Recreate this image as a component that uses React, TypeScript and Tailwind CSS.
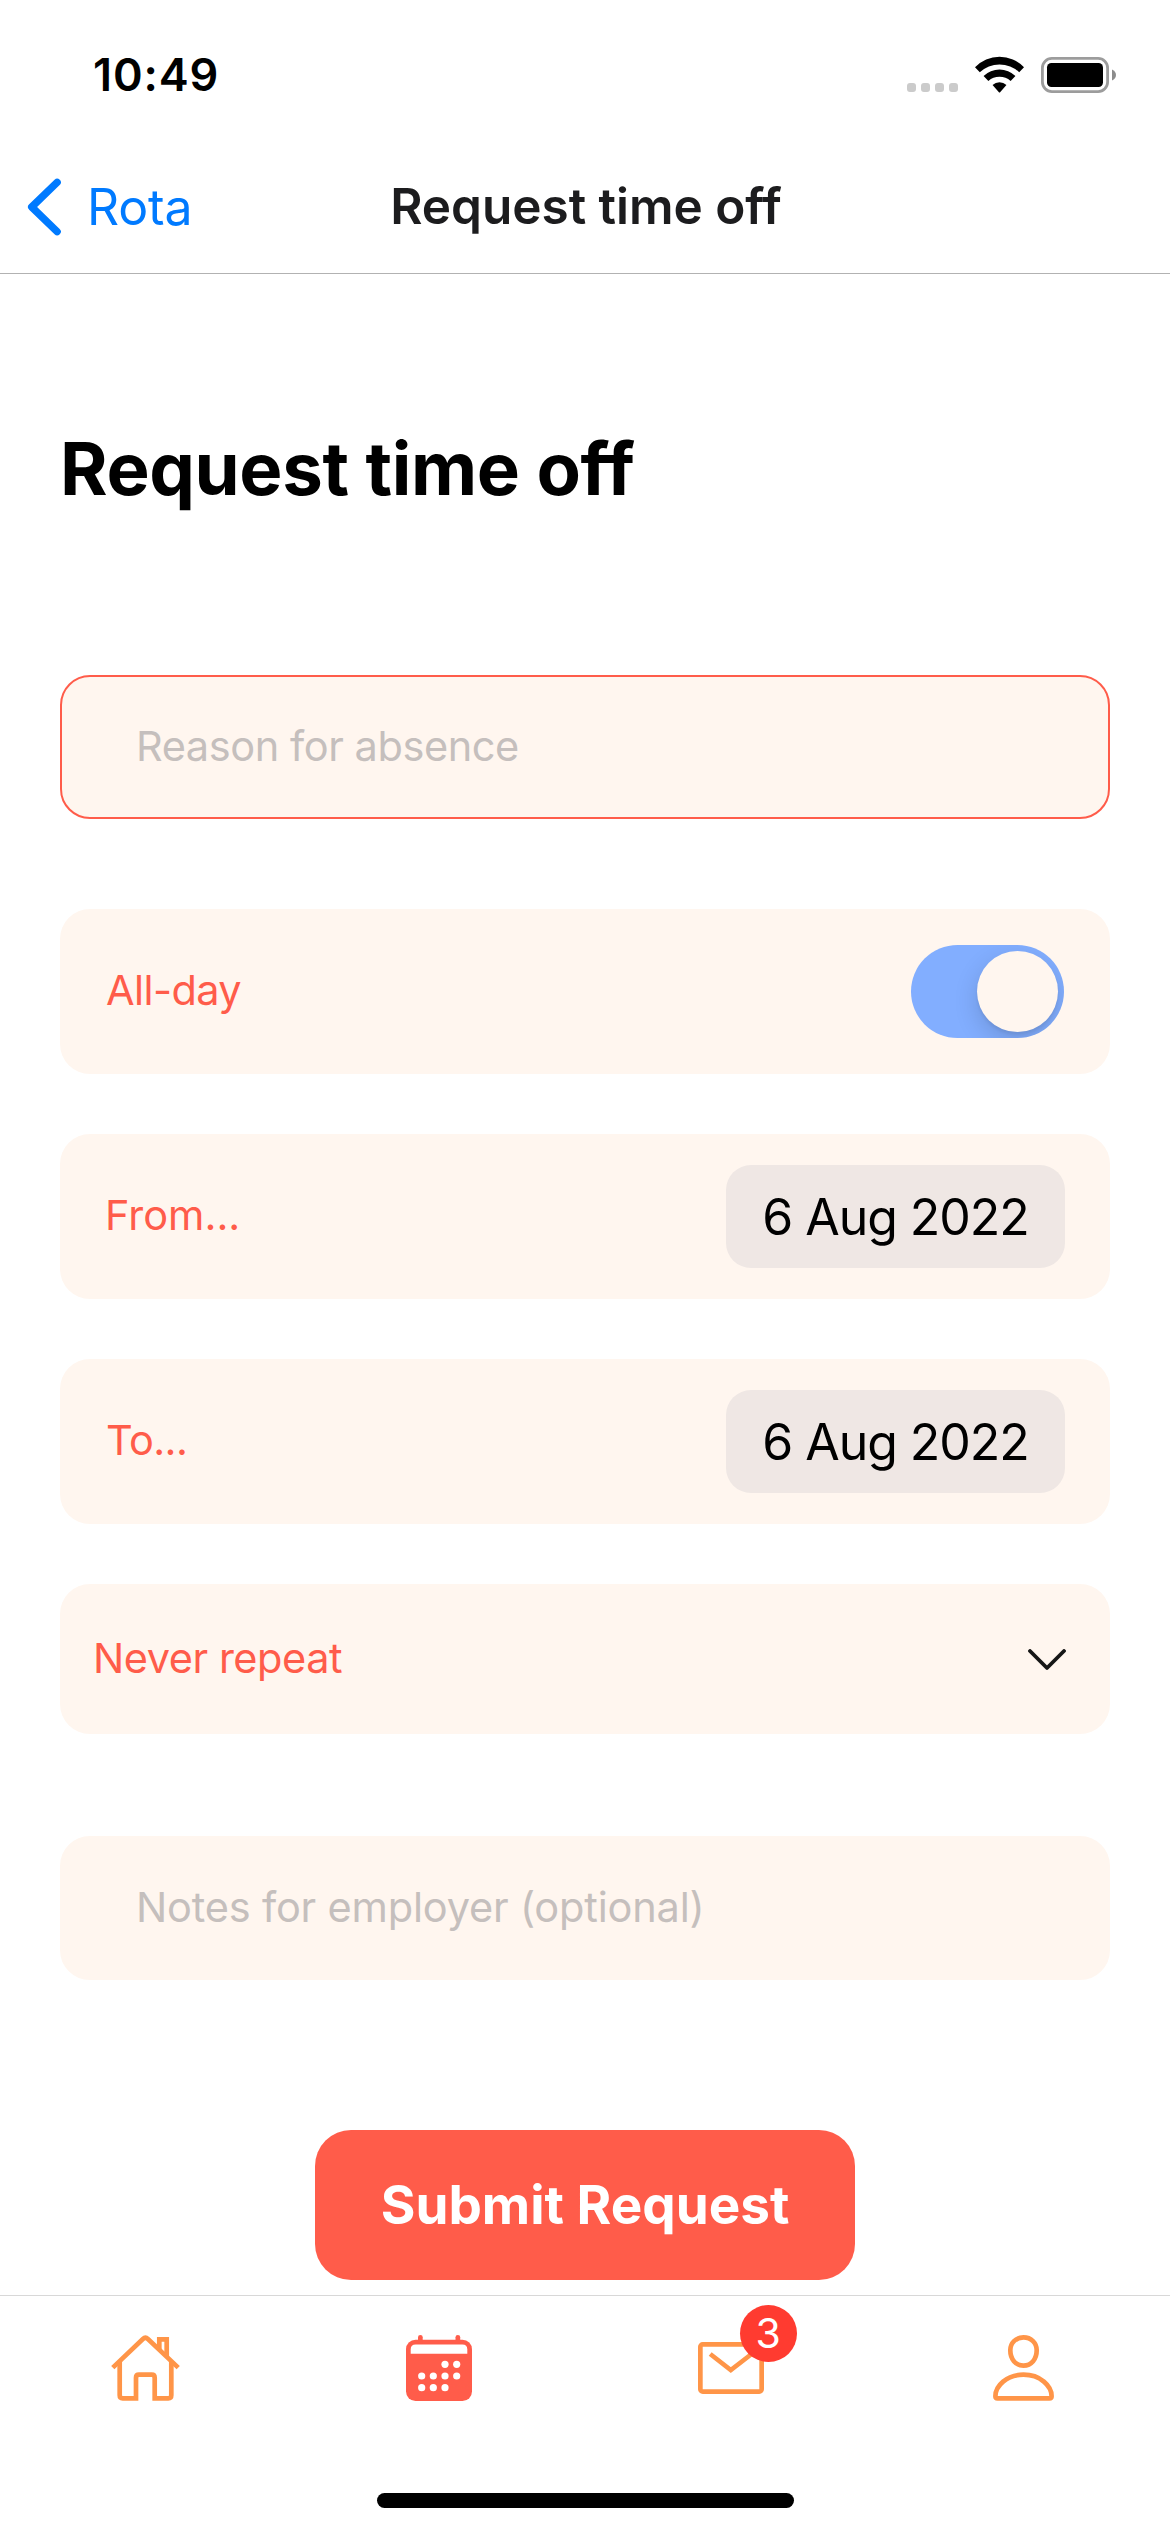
import { useState, type ReactNode } from 'react';

function StatusBar() {
  return (
    <div className="flex h-[141px] items-center justify-between pt-2 pr-[54px] pl-[93px]">
      <span className="text-[45px] leading-none font-semibold tracking-[0.87px] text-black">10:49</span>
      <div className="flex h-[37px] items-start">
        <div className="mt-[27px] flex gap-[5px]">
          {[0, 1, 2, 3].map((dot) => (
            <span key={dot} className="h-[9px] w-[9px] rounded-[3px] bg-[#cbcbcb]" />
          ))}
        </div>
        <svg width="49" height="37" viewBox="0 0 48 36" className="ml-[17px]" fill="#000">
          <path d="M0 10.9A33 33 0 0 1 48 10.9L43.3 15.8A28 28 0 0 0 4.7 15.8Z" />
          <path d="M8.4 19.4A22.5 22.5 0 0 1 39.6 19.4L34.9 24.4A16.5 16.5 0 0 0 13.1 24.4Z" />
          <path d="M17.2 28.4A9.6 9.6 0 0 1 30.8 28.4L24.6 35.4Q24 36 23.4 35.4Z" />
        </svg>
        <svg width="75" height="37" viewBox="0 0 75 37" className="ml-[17px]">
          <rect x="1.4" y="2.4" width="65.2" height="33.2" rx="9.5" fill="none" stroke="#9c9c9c" strokeWidth="2.8" />
          <rect x="6" y="7" width="56" height="24" rx="4.5" fill="#000" />
          <path d="M71 13.5C73.5 14.6 75 16.6 75 19S73.5 23.4 71 24.5Z" fill="#8c8c8c" />
        </svg>
      </div>
    </div>
  );
}

function NavBar() {
  return (
    <header className="grid h-[133px] grid-cols-[1fr_auto_1fr] items-center border-b border-[#b2b2b2]">
      <button className="flex items-center pl-[27px] text-[#007aff]">
        <svg width="34" height="58" viewBox="0 0 34 58" fill="none" stroke="currentColor" strokeWidth="7.4" strokeLinecap="round" strokeLinejoin="round">
          <path d="M30.1 4.4L4.7 29L30.1 53.6" />
        </svg>
        <span className="ml-[26px] text-[50px] leading-none tracking-[-0.18px]">Rota</span>
      </button>
      <h2 className="ml-[2px] text-[49.5px] leading-none font-semibold tracking-[-0.02px] text-[#1c1c1e]">Request time off</h2>
    </header>
  );
}

function TextField({ placeholder, className }: { placeholder: string; className: string }) {
  return (
    <input
      placeholder={placeholder}
      className={`block h-36 w-full rounded-[30px] border-2 bg-[#fff6ef] pb-[2px] pl-[74px] text-[41.5px] outline-none placeholder:text-[#c5bfbd] placeholder:opacity-100 ${className}`}
    />
  );
}

function Row({ label, children }: { label: ReactNode; children: ReactNode }) {
  return (
    <div className="flex h-[165px] items-center justify-between rounded-[30px] bg-[#fff6ef] pr-[45px] pl-[46px]">
      <span className="pb-[2px] text-[41.5px] leading-none text-[#ff5c4a]">{label}</span>
      {children}
    </div>
  );
}

function DatePill({ date }: { date: string }) {
  return (
    <button className="flex h-[103px] w-[339px] items-center justify-center rounded-[25px] bg-[#efe7e4] text-[50px] leading-none tracking-[-1.04px] text-black">
      {date}
    </button>
  );
}

function Toggle() {
  const [on, setOn] = useState(true);
  return (
    <button
      role="switch"
      aria-checked={on}
      onClick={() => setOn(!on)}
      className={`mr-px flex h-[93px] w-[153px] items-center overflow-hidden rounded-full px-[6px] ${on ? 'justify-end bg-[#82aeff]' : 'justify-start bg-gray-300'}`}
    >
      <span className="h-[81px] w-[81px] rounded-full bg-[#fff6ef] shadow-[0_9px_24px_rgba(0,0,0,0.15),0_3px_3px_rgba(0,0,0,0.06)]" />
    </button>
  );
}

function HomeIcon() {
  return (
    <svg width="69" height="66" viewBox="0 0 69 66" fill="none" stroke="#ff9548" strokeWidth="4.7" className="mr-[1px]">
      <path d="M1.8 32.6L31.9 4Q34.4 1.6 36.9 4L67.2 32.6" />
      <path d="M8.7 26V60.3Q8.7 63.3 11.7 63.3H25V42.7Q25 39.7 28 39.7H40.7Q43.7 39.7 43.7 42.7V63.3H57.3Q60.3 63.3 60.3 60.3V26" />
      <path d="M48.3 14.5V4.3H55.7V22" />
    </svg>
  );
}

const calendarDots = [
  [39, 29.3], [50.7, 29.3],
  [15.7, 41], [27.3, 41], [39, 41], [50.7, 41],
  [15.7, 52.7], [27.3, 52.7], [39, 52.7],
];

function CalendarIcon() {
  return (
    <svg width="66" height="66" viewBox="0 0 66 66" fill="#ff5c4a">
      <rect x="0" y="4.8" width="66" height="61.2" rx="9.5" />
      <rect x="12" y="0" width="4.7" height="9" rx="2.3" />
      <rect x="49.5" y="0" width="4.7" height="9" rx="2.3" />
      <path d="M4.7 18.8V14.5Q4.7 9.6 9.6 9.6H56.4Q61.3 9.6 61.3 14.5V18.8Z" fill="#fff" />
      {calendarDots.map(([x, y]) => (
        <circle key={`${x}-${y}`} cx={x} cy={y} r="3.6" fill="#fff" />
      ))}
    </svg>
  );
}

function MailIcon() {
  return (
    <svg width="66" height="52" viewBox="0 0 66 52" fill="none" stroke="#ff9548" strokeWidth="4.7">
      <rect x="2.35" y="2.35" width="61.3" height="47.3" rx="2.4" />
      <path d="M12.2 12L32.8 28L53.6 12" />
    </svg>
  );
}

function PersonIcon() {
  return (
    <svg width="61" height="66" viewBox="0 0 61 66" fill="none" stroke="#ff9548" strokeWidth="4.7">
      <path d="M30.5 2.4C38.2 2.4 43.7 8 43.7 15.3C43.7 24 38.5 30.6 30.5 30.6S17.3 24 17.3 15.3C17.3 8 22.8 2.4 30.5 2.4Z" />
      <path d="M2.4 61.2C2.4 51 13.6 39.7 30.5 39.7S58.6 51 58.6 61.2Q58.6 63.3 56.5 63.3H4.5Q2.4 63.3 2.4 61.2Z" />
    </svg>
  );
}

function TabBar() {
  return (
    <nav className="mt-[15px] border-t border-[#d8d8d8] pt-[39px]">
      <div className="grid h-[66px] grid-cols-4 items-center justify-items-center">
        <HomeIcon />
        <CalendarIcon />
        <div className="relative mr-px">
          <MailIcon />
          <span className="absolute -top-[37px] left-[42px] flex h-[57px] w-[57px] items-center justify-center rounded-full bg-[#ff3b30] text-[41px] leading-none text-white">
            3
          </span>
        </div>
        <PersonIcon />
      </div>
      <div className="mt-[92px] flex justify-center">
        <div className="h-[15px] w-[417px] rounded-full bg-black" />
      </div>
    </nav>
  );
}

export default function App() {
  return (
    <div className="flex h-[2532px] w-[1170px] flex-col overflow-hidden bg-white font-['Inter',sans-serif]">
      <StatusBar />
      <NavBar />
      <main className="flex flex-col px-[60px] pt-[150px]">
        <h1 className="text-[72.5px] leading-[90px] font-bold tracking-[-0.35px] text-black">Request time off</h1>
        <div className="mt-[161px]">
          <TextField placeholder="Reason for absence" className="border-[#ff5c4a] tracking-[-0.43px]" />
        </div>
        <div className="mt-[90px] flex flex-col gap-[60px]">
          <Row label={<span className="tracking-[-0.6px]">All-day</span>}>
            <Toggle />
          </Row>
          <Row label={<span className="-ml-px">From...</span>}>
            <DatePill date="6 Aug 2022" />
          </Row>
          <Row label={<span className="tracking-[-0.6px]">To...</span>}>
            <DatePill date="6 Aug 2022" />
          </Row>
          <button className="flex h-[150px] items-center justify-between rounded-[30px] bg-[#fff6ef] pt-px pr-11 pl-[33px]">
            <span className="pb-[2px] text-[41.5px] leading-none tracking-[-0.46px] text-[#ff5c4a]">Never repeat</span>
            <svg width="38" height="22" viewBox="0 0 38 22" fill="none" stroke="#161616" strokeWidth="3.8" strokeLinecap="round" strokeLinejoin="round">
              <path d="M2 2L19 19L36 2" />
            </svg>
          </button>
        </div>
        <div className="mt-[102px]">
          <TextField placeholder="Notes for employer (optional)" className="border-[#fff6ef] tracking-[-0.19px]" />
        </div>
        <button className="mt-[150px] h-[150px] w-[540px] self-center rounded-[36px] bg-[#ff5c4a] text-[53px] leading-none font-bold text-white">
          Submit Request
        </button>
      </main>
      <TabBar />
    </div>
  );
}
